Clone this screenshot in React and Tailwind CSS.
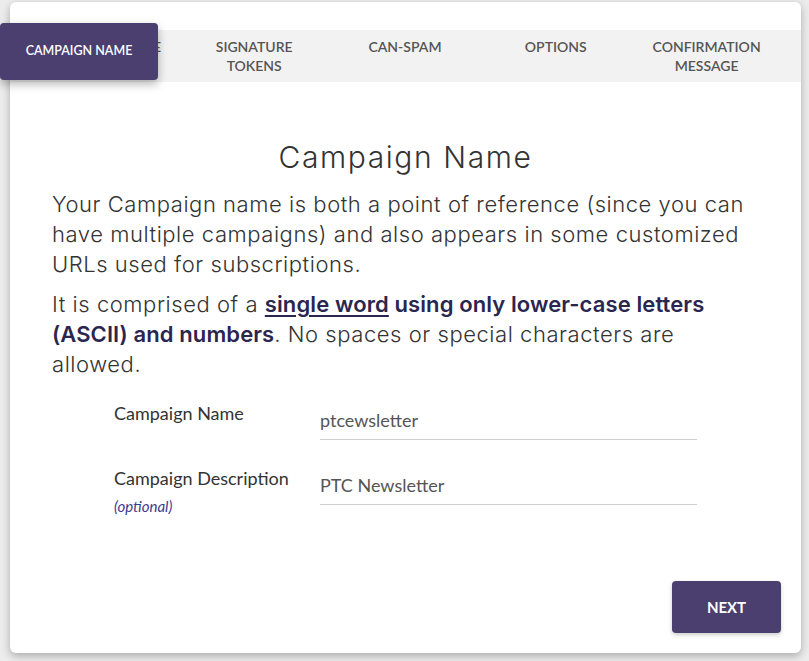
export default function App() {
  const sans = { fontFamily: "Lato, 'Open Sans', sans-serif" };
  const geo = { fontFamily: "Inter, 'Noto Sans', sans-serif" };
  const tabs = [
    ["CAMPAIGN NAME"],
    ["SIGNATURE", "TOKENS"],
    ["CAN-SPAM"],
    ["OPTIONS"],
    ["CONFIRMATION", "MESSAGE"],
  ];
  return (
    <div className="h-[661px] w-[809px] bg-[#ececec] pt-[2px] pl-[10px] overflow-hidden">
      <div className="relative h-[651px] w-[791px] rounded-md bg-white shadow-[0_3px_8px_rgba(0,0,0,0.28)] pt-[28px]">
        <div className="h-[52px] bg-[#f2f2f2] grid grid-cols-5 pl-[18px] pr-[19px] pt-[7px]" style={sans}>
          {tabs.map((t, i) => (
            <div key={i} className={`text-center text-[14px] leading-[19px] font-semibold text-[#555] ${i === 0 ? "pr-[4px]" : ""}`}>
              {t.map((l, j) => (
                <div key={j}>{l}</div>
              ))}
            </div>
          ))}
        </div>
        <div
          className="absolute left-[-10px] top-[21px] w-[158px] h-[57px] rounded-[4px] bg-[#4a3f6e] shadow-[0_4px_10px_rgba(0,0,0,0.3)] flex items-center justify-center text-white text-[12.5px] font-semibold"
          style={sans}
        >
          CAMPAIGN NAME
        </div>

        <h1 className="mt-[55px] text-center text-[30px] leading-[40px] font-light tracking-[1.6px] text-[#333]" style={geo}>
          Campaign Name
        </h1>
        <div className="px-[42px] mt-[12px] text-[22px] leading-[30px] tracking-[0.55px] text-[#333] font-light" style={geo}>
          <p>
            Your Campaign name is both a point of reference (since you can have multiple campaigns) and also appears
            in some customized URLs used for subscriptions.
          </p>
          <p className="mt-[10px]">
            It is comprised of a{" "}
            <span className="font-semibold tracking-[0.1px] text-[#2b2650]">
              <span className="underline underline-offset-[3px]">single word</span> using only lower-case letters
              (ASCII) and numbers
            </span>
            . No spaces or special characters are allowed.
          </p>
        </div>

        <div className="ml-[104px] mt-[22px] grid grid-cols-[206px_377px] gap-y-[26px]" style={sans}>
          <div className="text-[18px] leading-[24px] text-[#333]">Campaign Name</div>
          <div className="h-[39px] border-b border-[#d0d0d0] flex items-end pb-[7px] text-[18px] leading-[24px] text-[#555]">
            ptcewsletter
          </div>
          <div>
            <div className="text-[18px] leading-[24px] text-[#333]">Campaign Description</div>
            <div className="mt-[7px] text-[15px] leading-[18px] italic text-[#3d3a8c]">(optional)</div>
          </div>
          <div className="h-[39px] border-b border-[#d0d0d0] flex items-end pb-[7px] text-[18px] leading-[24px] text-[#555]">
            PTC Newsletter
          </div>
        </div>

        <div className="flex justify-end pr-[20px] mt-[66px]">
          <button
            className="w-[109px] h-[52px] rounded-[4px] bg-[#4a3f6e] text-white text-[15px] font-bold shadow-[0_2px_4px_rgba(0,0,0,0.2)]"
            style={sans}
          >
            NEXT
          </button>
        </div>
      </div>
    </div>
  );
}
